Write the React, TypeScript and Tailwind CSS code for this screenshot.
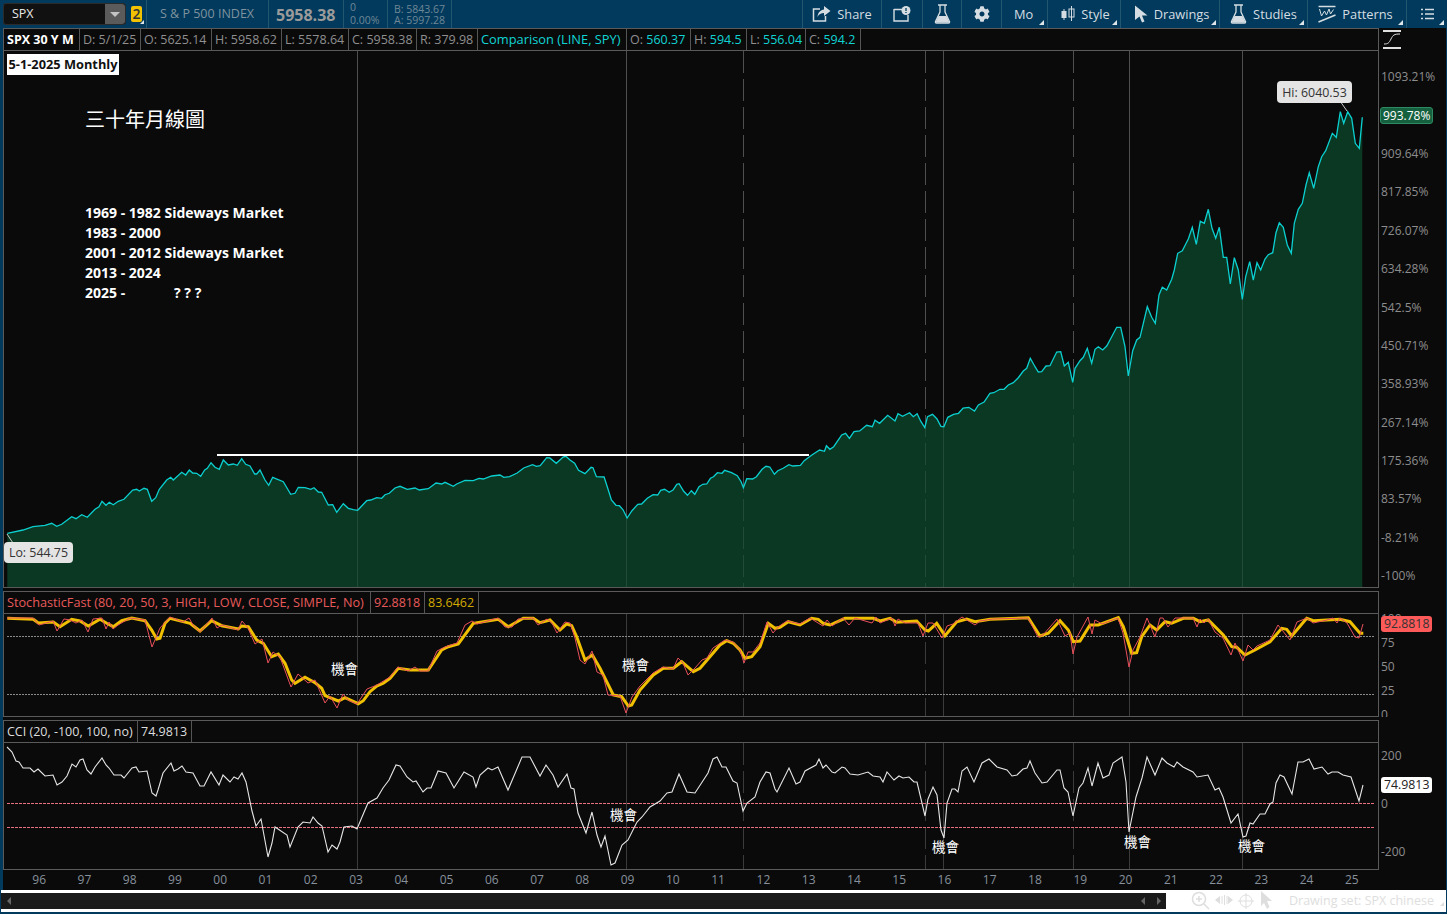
import { ReactNode } from 'react'
import { FaCog } from 'react-icons/fa'

// all traces are in page pixels, the svg viewBoxes below line up with the page
const pricePts =
  '7.3,533.3 23,530 33,526.7 45,525.3 51.7,523.3 56.7,526.3 61.7,524.3 71.7,516.7 76,518.7 81.7,514.7 87.3,517.3 95,509.3 99,506.7 102,501.3 106,505.3 109.3,502.3 113.3,504.7 118.3,501.3 124,499.3 132.7,490 136.7,489.3 139.3,491 144,488.3 147.3,489.3 151.7,501.3 155.7,497.7 159.3,489.3 166.7,480 170.7,477.3 173.3,480 181.7,472.3 185.7,475 189.3,470 192.7,473 196.7,473.3 200.7,476.3 204.7,470 207.3,468.3 211,462.7 215,467.3 219.3,469.3 223.3,460 228.3,465 233.3,464 237.3,465.3 241.7,458.7 245.7,464.3 250,466 254.7,474 256.7,474 260,470 265,480 268.7,485.3 272.7,477.3 283.3,481.7 290.7,494.3 295,493.3 298.3,487.3 305,487.7 310.7,489.3 314,487.7 318.3,492 321.7,492.3 328.3,505 332.7,504.7 336.7,512.3 343.3,503.7 348.3,508.3 353.3,509.7 357.7,510.3 366.7,500.7 370.7,500 376.7,497.7 381.7,498.3 385,494.7 389.3,493.3 395,488 400,486.3 407.3,489.3 415,488 419.3,490 428.3,488.7 436,483 441.7,484 445,482.3 453.3,486.3 456.7,484 465,480.3 473.3,480.7 479,478.3 483.3,479 491.7,476 500,475 503.8,477.3 509.6,476.7 517.2,473 523.7,468 532.5,464.7 536.4,466.3 540.2,465.7 546.7,457.7 549.8,458 556.3,463.3 563.1,457 565.8,456.3 570,460 574.6,463.3 578.5,470.3 585,473.7 591.1,467.3 593,467.7 596.4,476.7 604.1,477 608.3,490 611.4,500 616,505.3 619.4,505.7 623.2,510 627.1,518 632,510.7 637.8,504.3 641.6,504 647.3,498.3 653.1,494.7 657.7,495 660.7,490.3 664.6,489.3 669.2,492.3 673,490 676.8,484.3 679.1,483.7 683.7,491.3 687.5,495.3 691.4,490.7 694.8,494.3 699,486.7 702.8,484.3 706.7,484 710.5,478.3 713.5,476.7 717.4,472.7 722,473.3 724.6,470.3 731.5,472.7 737.3,475.7 741.1,481.7 743.4,487.7 746.8,478.7 752.6,479 756.4,476.7 762.1,469.3 766,466.3 769.8,467 774.4,474.3 777.8,470.7 783.2,468.3 788.9,464.7 792.8,466 800.4,465.3 804.2,460.7 811.9,455 819.6,450 824.5,451.3 826.4,445.7 829.9,449.3 833.7,446.7 841.7,435 845.6,433.3 849.4,438.3 854,431.7 859.7,431 866.6,425.3 872.4,426.7 875,420.3 879.6,423.3 887.7,415.3 895,421 898,413.7 902.6,416.3 909.5,412.7 913.3,416.7 917.1,413.7 921,421.7 924.8,427.7 927.5,416.7 932.5,414.3 937,419 940.9,426.3 943.9,426.7 947.8,417.3 953.5,414.3 958.5,413.3 963.1,408 968.8,407.3 974.5,411 978.4,405 984.1,402 989.9,393.3 993.7,392.7 1000,389.3 1004,389.3 1008.3,385 1013.3,382.7 1018.3,377.7 1023.3,371 1026.7,368.3 1030.3,358.3 1035,366.7 1038.3,372 1041.7,371.7 1046,366 1050,365.7 1056.7,352 1060.7,351.7 1064.3,366 1068.3,362.3 1072.7,382.3 1075,368.3 1080,360.7 1083.3,357.3 1087.3,348.3 1091.7,363.3 1095,349.3 1098.3,346.7 1102.7,350 1106.7,346 1111.7,336.7 1116.7,327.3 1120.7,327.3 1125,346.7 1128.3,376 1132.7,350.7 1136.7,340 1140,337.3 1147.3,306.7 1151.7,317.3 1155.3,323.3 1159,295 1162.3,287.3 1166.7,290 1171.7,279.3 1174.3,270 1177.7,253.3 1182.3,250.7 1188.3,239 1192.3,227.3 1196.3,244.3 1200.3,221.3 1204.3,223.3 1208.3,209.3 1212,228.3 1215.7,238.3 1219.3,227.3 1223.3,257.3 1226.7,257.3 1230.3,284 1234.3,257.7 1238.3,270 1242.3,299.3 1245.7,276.7 1249.7,261.7 1253.3,280 1257,262.7 1260.7,270 1265,259 1268.3,254.7 1272.7,252.7 1276,232.7 1279.3,222.7 1283.3,227.3 1287.3,245 1291.3,253.3 1294.3,223.3 1298.3,209.3 1302.3,203.3 1306,185 1309.3,172.7 1313.7,188.3 1318.3,166.7 1321.7,156.7 1325.7,150.7 1332.3,133.3 1336.3,137.3 1340.3,111.7 1343.7,123.3 1347.7,111.7 1351.7,118.3 1355.3,143.3 1359.3,148.3 1362.3,117.3'

const stochD =
  '7.3,618.3 33.3,619.3 38.3,623 53.3,622 60,626.7 71.7,619.3 80,621 88.3,626 100,619.3 106.7,623.3 113.3,626.7 121.7,620.7 131.7,618 145,620.7 151.7,630 156.7,639 160,638.3 165,623.3 170,618.3 190,623.3 200,631 211.7,620.7 221.7,625.7 238.3,629 241.7,626 248.3,626.7 256.7,640 263.3,643.3 271.7,656.7 278.3,654 285,663.3 291.7,680 295,683.3 305,677.3 315,682.7 321.7,688.3 325,695.7 338.3,701 345,697.7 358.3,703.7 363.3,700.7 370,691.7 376.7,686 383.3,683.3 390,678.3 398.3,668.3 410,670 428.3,670 441.7,650 448.3,646.7 458.3,644 473.3,623.3 498.3,619.3 508.3,626.7 523.3,618.3 533.3,618.3 540,622.7 550,620 560,630 566.7,624 571.7,625.7 576.7,636.7 585,660 592.3,655 600,668.3 613.3,695 621.7,696.7 628.3,706 631.7,705 640,690 653.3,675 663.3,668.3 673.3,668.3 681.7,661.7 693.3,671.7 700,668.3 720,645 726.7,640.7 733.3,643.3 740,650 745,658.3 751.7,656.7 760,646.7 768.3,623.3 775,628.3 780,627.3 788.3,621.7 800,625 811.7,618.3 818.3,619.3 823.3,623.3 830,625 845,618.3 873.3,618.3 880,621 890,618.3 896.7,622.3 916.7,621 925,630 928.3,631 936.7,623.3 945,635.7 956.7,621.7 966.7,619 975,621.7 990,619.3 1028.3,617.7 1040,636 1048.3,633.3 1060,620.7 1068.3,630 1073.3,641.7 1080,641 1090,625 1098.3,625 1118.3,617.7 1123.3,626.7 1131.7,653.3 1136.7,652.7 1141.7,636.7 1150,625 1156.7,630 1165,621.7 1171.7,623.3 1183.3,618.3 1193.3,618.3 1200,621.7 1208.3,620 1223.3,635 1231.7,646.7 1236.7,647.3 1245,655 1255,650 1270,641.7 1281.7,628.3 1286.7,629.3 1291.7,636 1306.7,618.3 1313.3,620.7 1326.7,620 1340,619.3 1350,621.7 1360,633.3 1363.3,633.3'

const stochK =
  '7,618 33,618 39,625 53,621 57,631 64,619 70,620 76,623 82,620 88,632 93,619 102,618 106,629 109,622 113,629 118,625 130,618 145,620 152,647 160,628 170,617 183,622 189,618 193,625 200,632 212,618 217,628 222,625 238,630 242,621 248,628 255,644 262,639 268,663 273,652 280,657 291,687 298,674 308,683 315,680 325,703 330,696 337,708 343,694 348,700 357,704 367,689 377,685 390,677 398,667 408,671 415,667 420,671 428,671 437,651 445,647 457,643 465,625 472,621 477,624 498,618 505,627 512,627 518,619 533,618 538,625 547,619 552,623 557,633 565,622 570,623 575,638 580,660 585,664 592,651 597,672 603,675 608,695 620,696 626,713 632,697 640,686 653,673 663,667 673,669 678,658 683,663 688,675 695,668 702,660 707,658 713,648 725,640 733,642 740,650 744,663 748,652 753,652 760,643 767,622 773,633 778,627 787,621 800,624 810,618 823,626 827,620 832,626 843,618 849,625 855,618 872,623 876,617 880,623 892,618 895,626 898,619 905,623 918,623 923,636 928,623 933,623 942,638 947,626 953,624 962,617 975,625 980,621 993,619 1028,618 1038,637 1043,635 1057,619 1065,636 1070,633 1073,654 1077,637 1088,617 1092,634 1095,620 1102,624 1118,618 1123,633 1129,667 1133,650 1140,637 1147,618 1155,637 1160,618 1163,618 1168,627 1175,618 1193,618 1197,627 1200,619 1204,623 1208,619 1215,632 1223,638 1231,655 1235,643 1243,661 1248,645 1253,650 1257,646 1270,640 1278,625 1290,640 1297,622 1307,618 1313,623 1327,620 1333,618 1337,623 1340,618 1347,623 1355,637 1359,638 1363,624'

const cciPts =
  '7,747 12,752 16,761 19,762 23,768 30,768 34,772 38,769 45,776 53,775 57,785 62,782 67,776 72,764 76,767 80,760 83,759 87,770 91,774 95,767 102,758 106,765 109,768 114,775 121,775 124,778 132,768 136,767 139,772 147,771 152,793 156,796 158,790 163,773 171,763 174,771 178,769 182,766 186,772 193,773 200,786 204,786 211,772 219,785 223,775 230,782 234,777 238,779 242,773 246,782 252,811 256,826 261,819 268,857 272,843 275,827 287,835 290,847 298,827 303,822 310,823 313,817 318,823 322,826 328,852 332,845 337,849 340,842 344,827 352,826 357,829 362,817 368,803 377,798 383,788 389,780 396,765 400,766 407,777 413,782 416,781 423,792 427,788 431,788 438,771 446,773 454,788 464,772 473,777 476,787 480,775 488,768 492,770 498,767 508,790 522,757 530,757 540,776 546,765 553,775 558,787 567,774 571,788 574,789 578,813 586,833 592,812 597,835 601,847 605,836 611,865 615,863 622,845 628,840 637,822 642,817 650,807 660,801 667,793 672,792 679,774 687,792 695,793 708,773 713,759 717,757 722,767 726,767 733,781 737,783 743,811 747,803 755,797 760,782 766,772 770,773 775,789 777,792 789,768 796,784 800,782 805,771 816,765 819,759 823,768 826,765 832,772 835,773 842,767 845,768 850,774 858,775 868,772 873,776 880,777 883,782 887,772 894,780 899,776 903,778 909,777 914,782 917,782 925,816 928,799 933,787 937,795 941,830 944,838 947,803 952,789 955,789 958,792 962,771 967,767 974,782 982,763 989,759 997,767 1007,770 1012,776 1017,775 1023,769 1027,768 1030,761 1035,773 1042,783 1047,782 1057,770 1060,770 1064,788 1068,792 1073,816 1079,788 1083,783 1088,768 1092,786 1098,763 1103,778 1109,775 1113,763 1122,757 1126,782 1129,832 1136,797 1142,778 1147,757 1155,775 1162,758 1167,763 1174,767 1177,762 1183,767 1193,772 1197,777 1208,775 1215,790 1219,788 1223,797 1231,823 1238,814 1243,837 1246,836 1250,823 1253,824 1260,814 1265,814 1270,804 1273,802 1276,783 1280,775 1284,777 1292,794 1298,762 1303,762 1309,759 1314,769 1322,767 1328,774 1332,772 1338,772 1343,775 1351,777 1359,801 1363,785'

const solidLines = [357.5, 626.5, 943.5, 1129.5, 1242.5]
const dashedLines = [743.5, 925.5, 1073.5]

const priceTicks = ['1093.21%', '993.78%', '909.64%', '817.85%', '726.07%', '634.28%', '542.5%', '450.71%', '358.93%', '267.14%', '175.36%', '83.57%', '-8.21%', '-100%']
const years = ['96', '97', '98', '99', '00', '01', '02', '03', '04', '05', '06', '07', '08', '09', '10', '11', '12', '13', '14', '15', '16', '17', '18', '19', '20', '21', '22', '23', '24', '25']

function GridLines({ top, bottom, opacity = 0.2 }: { top: number; bottom: number; opacity?: number }) {
  return (
    <>
      {solidLines.map((x) => (
        <line key={x} x1={x} x2={x} y1={top} y2={bottom} stroke="#ffffff" strokeOpacity={opacity} />
      ))}
      {dashedLines.map((x) => (
        <line key={x} x1={x} x2={x} y1={top} y2={bottom} stroke="#ffffff" strokeOpacity={opacity} strokeDasharray="22 6" />
      ))}
    </>
  )
}

function Cell({ width, children }: { width: string; children: ReactNode }) {
  return <div className={`flex h-full shrink-0 items-center whitespace-nowrap border-r border-[#555555] pl-[3px] pt-px ${width}`}>{children}</div>
}

function Panel({ header, height, children }: { header: ReactNode; height: string; children: ReactNode }) {
  return (
    <div className="w-[1376px] shrink-0 border border-[#5a5a5a]">
      <div className="flex h-[22px] border-b border-[#5a5a5a] text-[12.5px]">{header}</div>
      <div className={`relative ${height}`}>{children}</div>
    </div>
  )
}

function Note({ className }: { className: string }) {
  return <div className={`absolute text-[13.5px] leading-none text-white ${className}`}>機會</div>
}

function Tri() {
  return <span className="absolute bottom-[3px] right-[3px] h-0 w-0 border-b-[5px] border-l-[5px] border-b-[#dfe6ea] border-l-transparent" />
}

function ToolCell({ width, label, icon, menu }: { width: string; label?: string; icon?: ReactNode; menu?: boolean }) {
  return (
    <div className={`relative flex h-full items-center justify-center gap-[6px] border-l border-[#23566f] text-[12.8px] text-[#d5dde2] ${width}`}>
      {icon}
      {label && <span className="pt-px">{label}</span>}
      {menu && <Tri />}
    </div>
  )
}

function FlaskIcon() {
  return (
    <svg width="17" height="20" viewBox="0 0 17 20" fill="none">
      <path d="M4 1h9M6 1v7L1.500 17.500c-.3.800 0 1.500 1 1.500h12c1 0 1.300-.7 1-1.500L11 8V1" stroke="#d5dde2" strokeWidth="1.300" />
      <path d="M4.500 12h8l3 6.500H1.500z" fill="#d5dde2" />
    </svg>
  )
}

export default function App() {
  return (
    <div className="flex h-[914px] w-[1447px] flex-col overflow-hidden bg-[#013a5c] font-['Open_Sans','Noto_Sans_CJK_TC',sans-serif]">
      {/* top toolbar */}
      <div className="flex h-[28px] shrink-0 items-center">
        <div className="ml-[3px] flex h-[22px] w-[123px] items-center justify-between rounded-[3px] border border-[#2b2b2b] bg-[#111111] pl-2 text-[12.5px] text-[#e8e8e8]">
          SPX
          <span className="flex h-full w-[20px] items-center justify-center rounded-r-[3px] bg-[#5b5b5b]">
            <span className="h-0 w-0 border-x-[5px] border-t-[5px] border-x-transparent border-t-[#c4c4c4]" />
          </span>
        </div>
        <div className="relative ml-[5px] flex h-[16px] w-[11px] items-center justify-center rounded-[2px] bg-[#f2c200] text-[14px] font-semibold leading-none text-[#333333]">
          2
          <span className="absolute -bottom-[2px] -right-[2px] h-0 w-0 border-b-[4px] border-l-[4px] border-b-[#dfe6ea] border-l-transparent" />
        </div>
        <div className="ml-[4px] flex h-full w-[122px] items-center border-l border-[#23566f] pl-[13px] pt-px text-[12.5px] text-[#7f929f]">S &amp; P 500 INDEX</div>
        <div className="flex h-full w-[75px] items-center border-l border-[#23566f] pl-[7px] pt-px text-[16px] font-bold text-[#9a9a9a]">5958.38</div>
        <div className="flex h-full w-[44px] flex-col justify-center border-l border-[#23566f] pl-[6px] text-[10.5px] text-[#6f8797]">
          <span className="block leading-[13px]">0</span>
          <span className="block leading-[13px]">0.00%</span>
        </div>
        <div className="flex h-full w-[65px] flex-col justify-center border-x border-[#23566f] pl-[6px] pt-px text-[10.5px] text-[#6f8797]">
          <span className="block leading-[11px]">B: 5843.67</span>
          <span className="block leading-[11px]">A: 5997.28</span>
        </div>
        <div className="ml-auto flex h-full">
          <ToolCell
            width="w-[79px]"
            label="Share"
            icon={
              <svg width="19" height="16" viewBox="0 0 19 16" fill="none">
                <path d="M8 3H1.500v12h12v-5" stroke="#d5dde2" strokeWidth="1.500" />
                <path d="M12 0l6.500 5-6.500 5V7c-3 0-5 1-6.500 4 .3-4.500 3-7 6.500-7.500z" fill="#d5dde2" />
              </svg>
            }
          />
          <ToolCell
            width="w-[41px]"
            icon={
              <svg width="18" height="16" viewBox="0 0 18 16" fill="none">
                <path d="M1 3.500h9M1 3v12h14V9" stroke="#d5dde2" strokeWidth="1.400" />
                <circle cx="13" cy="4.500" r="4.500" fill="#d5dde2" />
                <path d="M13 2v3M13 6v1" stroke="#013a5c" strokeWidth="1.300" />
              </svg>
            }
          />
          <ToolCell width="w-[39px]" icon={<FlaskIcon />} />
          <ToolCell width="w-[40px]" icon={<FaCog className="h-[16px] w-[16px]" />} />
          <ToolCell width="w-[46px] pr-[2px]" label="Mo" menu />
          <ToolCell
            width="w-[73px] pl-[3px]"
            label="Style"
            menu
            icon={
              <svg width="14" height="18" viewBox="0 0 14 18" fill="none">
                <path d="M3 4v11M10.500 1v15" stroke="#d5dde2" />
                <rect x="0.500" y="6" width="5" height="7" fill="#d5dde2" />
                <rect x="8" y="4" width="5" height="8" stroke="#d5dde2" />
              </svg>
            }
          />
          <ToolCell
            width="w-[99px] pl-[3px]"
            label="Drawings"
            menu
            icon={
              <svg width="14" height="18" viewBox="0 0 14 18">
                <path d="M1 0.500l12.500 10H8l2.500 6-2.500 1-2.500-6L1 15z" fill="#d5dde2" />
              </svg>
            }
          />
          <ToolCell width="w-[88px]" label="Studies" menu icon={<FlaskIcon />} />
          <ToolCell
            width="w-[99px] pr-[3px]"
            label="Patterns"
            menu
            icon={
              <svg width="18" height="18" viewBox="0 0 18 18" fill="none">
                <path d="M0.500 1.500h17" stroke="#d5dde2" strokeWidth="1.500" />
                <path d="M1.500 4l2 7 3-5 2 4 2.500-6 1.500 5 3-4.500" stroke="#d5dde2" />
                <path d="M0.500 17l17-7" stroke="#d5dde2" strokeWidth="1.500" />
              </svg>
            }
          />
          <ToolCell
            width="w-[41px]"
            menu
            icon={
              <svg width="13" height="12" viewBox="0 0 13 12" fill="none">
                <path d="M4 1.500h9M4 6h9M4 10.500h9M0 1.500h2M0 6h2M0 10.500h2" stroke="#d5dde2" strokeWidth="1.500" />
              </svg>
            }
          />
        </div>
      </div>

      <div className="ml-[3px] mr-px flex flex-col bg-[#0a0a0b]">
        {/* price panel */}
        <div className="flex h-[560px]">
          <Panel
            height="h-[536px]"
            header={
              <>
                <Cell width="w-[76px]">
                  <span className="font-bold text-white">SPX 30 Y M</span>
                </Cell>
                <Cell width="w-[61px]"><span className="text-[#8f8f8f]">D: 5/1/25</span></Cell>
                <Cell width="w-[71px]"><span className="text-[#8f8f8f]">O: 5625.14</span></Cell>
                <Cell width="w-[70px]"><span className="text-[#8f8f8f]">H: 5958.62</span></Cell>
                <Cell width="w-[67px]"><span className="text-[#8f8f8f]">L: 5578.64</span></Cell>
                <Cell width="w-[68px]"><span className="text-[#8f8f8f]">C: 5958.38</span></Cell>
                <Cell width="w-[61px]"><span className="text-[#8f8f8f]">R: 379.98</span></Cell>
                <Cell width="w-[149px]"><span className="text-[12.85px] text-[#10d4d4]">Comparison (LINE, SPY)</span></Cell>
                <Cell width="w-[64px]"><span className="text-[#8f8f8f]">O:&nbsp;</span><span className="text-[#10d4d4]">560.37</span></Cell>
                <Cell width="w-[56px]"><span className="text-[#8f8f8f]">H:&nbsp;</span><span className="text-[#10d4d4]">594.5</span></Cell>
                <Cell width="w-[59px]"><span className="text-[#8f8f8f]">L:&nbsp;</span><span className="text-[#10d4d4]">556.04</span></Cell>
                <Cell width="w-[55px]"><span className="text-[#8f8f8f]">C:&nbsp;</span><span className="text-[#10d4d4]">594.2</span></Cell>
              </>
            }
          >
            <svg className="block" width="1374" height="536" viewBox="4 51 1374 536">
              <GridLines top={51} bottom={587} />
              <polygon points={`${pricePts} 1362.3,587 7.3,587`} fill="#0a3822" />
              <GridLines top={51} bottom={587} opacity={0.1} />
              <polyline points={pricePts} fill="none" stroke="#0ccfcf" strokeWidth="1.300" />
              <line x1="217" x2="809" y1="455" y2="455" stroke="#ffffff" strokeWidth="2" />
              <line x1="1340" y1="101" x2="1347" y2="111" stroke="#c8c8c8" />
              <line x1="7" y1="534" x2="13" y2="543" stroke="#c8c8c8" />
            </svg>
            <div className="absolute left-[3px] top-[3px] flex h-[21px] w-[112px] items-center justify-center bg-white text-[12.8px] font-bold text-[#111111]">5-1-2025 Monthly</div>
            <div className="absolute left-[81px] top-[56px] text-[20px] leading-[26px] text-white">三十年月線圖</div>
            <div className="absolute left-[81px] top-[152px] whitespace-pre text-[14px] font-bold leading-[20px] text-white">
              <div>1969 - 1982 Sideways Market</div>
              <div>1983 - 2000</div>
              <div>2001 - 2012 Sideways Market</div>
              <div>2013 - 2024</div>
              <div className="relative">
                2025 -<span className="absolute left-[89px]">? ? ?</span>
              </div>
            </div>
            <div className="absolute left-[1273px] top-[30px] flex h-[22px] w-[75px] items-center justify-center rounded-[4px] bg-[#e4e4e4] pt-[2px] text-[12.4px] text-[#333333]">Hi: 6040.53</div>
            <div className="absolute left-0 top-[491px] flex h-[21px] w-[69px] items-center justify-center rounded-[4px] bg-[#e4e4e4] pt-[2px] text-[12.4px] text-[#333333]">Lo: 544.75</div>
          </Panel>
          <div className="flex-1 pl-[2px] text-[12px] text-[#8d8d8d]">
            <svg className="mt-[2px] ml-[1px] block" width="20" height="20" viewBox="0 0 20 20" fill="none">
              <path d="M1 1h18M1 18h18" stroke="#e0e0e0" strokeWidth="2" />
              <path d="M2 14c4 0 5-1 7-5s3-5 9-5" stroke="#e0e0e0" />
            </svg>
            <div className="mt-[8px] flex flex-col">
              {priceTicks.map((tick) => (
                <div key={tick} className="flex h-[38.4px] items-center">
                  {tick === '993.78%' ? <span className="-ml-px rounded-[3px] border border-[#2e8a62] bg-[#14603f] px-[2px] leading-[15px] text-white">{tick}</span> : tick}
                </div>
              ))}
            </div>
          </div>
        </div>

        {/* stochastic panel */}
        <div className="mt-[3px] flex">
          <Panel
            height="h-[102px]"
            header={
              <>
                <Cell width="w-[367px]"><span className="text-[12.7px] text-[#e85a5a]">StochasticFast (80, 20, 50, 3, HIGH, LOW, CLOSE, SIMPLE, No)</span></Cell>
                <Cell width="w-[54px]"><span className="text-[#e85a5a]">92.8818</span></Cell>
                <Cell width="w-[54px]"><span className="text-[#d2a900]">83.6462</span></Cell>
              </>
            }
          >
            <svg className="block" width="1374" height="102" viewBox="4 614 1374 102">
              <GridLines top={614} bottom={716} />
              <line x1="7" x2="1375" y1="636.5" y2="636.5" stroke="#8a8a8a" strokeDasharray="2 1" />
              <line x1="7" x2="1375" y1="694.5" y2="694.5" stroke="#8a8a8a" strokeDasharray="2 1" />
              <polyline points={stochD} fill="none" stroke="#f0c000" strokeWidth="3" />
              <polyline points={stochK} fill="none" stroke="#e8505a" strokeWidth="1" />
            </svg>
            <Note className="left-[327px] top-[49px]" />
            <Note className="left-[618px] top-[45px]" />
          </Panel>
          <div className="relative h-[126px] flex-1 overflow-hidden pl-[2px] pt-[16px] text-[12px] text-[#8d8d8d]">
            <div className="flex h-[24px] items-center">100</div>
            <div className="flex h-[24px] items-center">75</div>
            <div className="flex h-[24px] items-center">50</div>
            <div className="flex h-[24px] items-center">25</div>
            <div className="flex h-[24px] items-center">0</div>
            <div className="absolute left-[2px] top-[25px] rounded-[3px] bg-[#ff5a5a] px-[3px] text-[12.3px] leading-[16px] text-[#333333]">92.8818</div>
          </div>
        </div>

        {/* cci panel */}
        <div className="mt-[3px] flex">
          <Panel
            height="h-[126px]"
            header={
              <>
                <Cell width="w-[134px]"><span className="text-[#dddddd]">CCI (20, -100, 100, no)</span></Cell>
                <Cell width="w-[54px]"><span className="text-[#dddddd]">74.9813</span></Cell>
              </>
            }
          >
            <svg className="block" width="1374" height="126" viewBox="4 743 1374 126">
              <GridLines top={743} bottom={869} />
              <line x1="7" x2="1375" y1="803.5" y2="803.5" stroke="#e8707c" strokeDasharray="3 1" />
              <line x1="7" x2="1375" y1="827.5" y2="827.5" stroke="#e8707c" strokeDasharray="3 1" />
              <polyline points={cciPts} fill="none" stroke="#e6e6e6" strokeWidth="1.100" />
            </svg>
            <Note className="left-[606px] top-[66px]" />
            <Note className="left-[928px] top-[98px]" />
            <Note className="left-[1120px] top-[93px]" />
            <Note className="left-[1234px] top-[97px]" />
          </Panel>
          <div className="relative h-[150px] flex-1 pl-[2px] pt-[12px] text-[12px] text-[#8d8d8d]">
            <div className="flex h-[48px] items-center">200</div>
            <div className="flex h-[48px] items-center">0</div>
            <div className="flex h-[48px] items-center">-200</div>
            <div className="absolute left-[2px] top-[57px] rounded-[3px] bg-white px-[3px] text-[12.3px] leading-[16px] text-[#222222]">74.9813</div>
          </div>
        </div>

        {/* time axis */}
        <div className="flex h-[20px] items-center pl-[13.500px] text-[12px] text-[#87919b]">
          {years.map((year) => (
            <div key={year} className="w-[45.27px] shrink-0 text-center">{year}</div>
          ))}
        </div>
      </div>

      {/* bottom strip */}
      <div className="ml-px mr-px flex h-[22px] shrink-0 items-center bg-white">
        <div className="flex h-[16px] w-[1165px] items-center bg-[#1a1a1a] pl-[6px] pr-[5px]">
          <span className="h-0 w-0 border-y-[4px] border-r-[4px] border-y-transparent border-r-[#666666]" />
          <span className="ml-auto h-0 w-0 border-y-[4px] border-r-[4px] border-y-transparent border-r-[#666666]" />
          <span className="ml-[12px] h-0 w-0 border-y-[4px] border-l-[4px] border-y-transparent border-l-[#666666]" />
        </div>
        <svg className="ml-[25px] shrink-0" width="92" height="20" viewBox="0 0 92 20" fill="none">
          <circle cx="8" cy="8" r="6.500" stroke="#dedede" strokeWidth="1.500" />
          <path d="M13 13l5 5M5 8h6M8 5v6" stroke="#dedede" strokeWidth="1.500" />
          <path d="M24 9l5-4v8zM42 9l-5-4v8z" fill="#dedede" />
          <path d="M31 5v8M33.500 4v10M36 5v8" stroke="#dedede" />
          <circle cx="55" cy="10" r="6" stroke="#dedede" />
          <path d="M47 10h16M55 2v16" stroke="#dedede" />
          <path d="M70 0l11 10h-5l2.500 6-2.500 2-3-6-3 3z" fill="#dedede" />
        </svg>
        <span className="ml-[6px] whitespace-nowrap text-[12.5px] text-[#dedede]">Drawing set: SPX chinese</span>
        <span className="ml-auto mr-[2px] mt-[6px] h-0 w-0 border-b-[4px] border-l-[4px] border-b-[#dedede] border-l-transparent" />
      </div>
    </div>
  )
}
